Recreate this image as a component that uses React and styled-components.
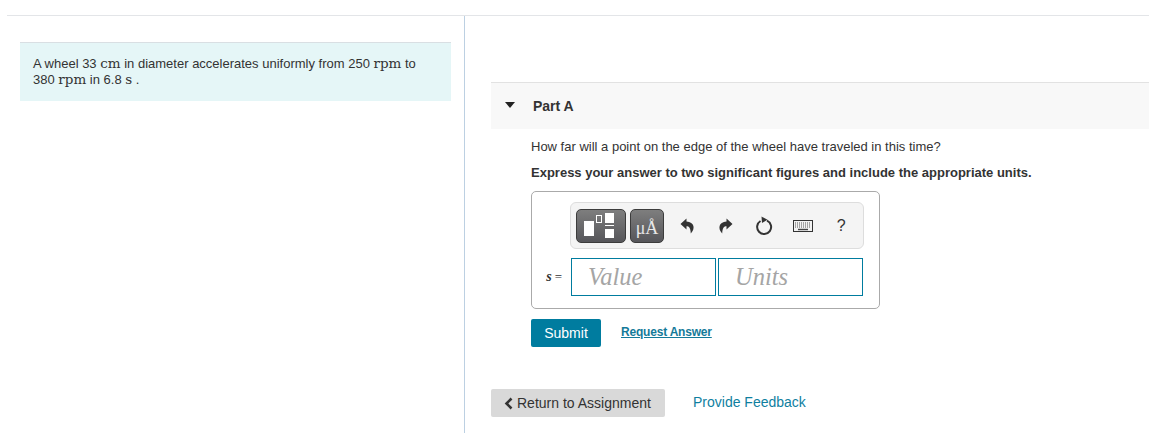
import React from "react";
import styled, { createGlobalStyle } from "styled-components";

const Global = createGlobalStyle`
  html, body { margin: 0; padding: 0; background: #fff; height: 433px; overflow: hidden; }
  body { font-family: "Liberation Sans", Arial, sans-serif; font-size: 13px; color: #333; }
`;
const Page = styled.div`
  height: 433px; box-sizing: border-box; padding: 15px 0 0 7px;
  display: flex; flex-direction: column;
`;
const Columns = styled.div`
  flex: 1; display: grid; grid-template-columns: 458px 1fr;
  border-top: 1px solid #e3e5e8;
`;
const LeftCol = styled.div`
  border-right: 1px solid #bcd0e2; padding: 26px 13px 0 13px;
`;
const Intro = styled.div`
  background: #e5f6f7; border-top: 1px solid #d9dfe3; height: 59px; box-sizing: border-box;
  padding: 13px 13px 0; font-size: 13px; line-height: 16px; color: #333;
  width: 431px;
`;
const MathText = styled.span`
  font-family: "DejaVu Serif", "Liberation Serif", serif; font-size: 13.5px; line-height: 0;
`;
const RightCol = styled.div`
  padding: 66px 0 0 26px; display: flex; flex-direction: column;
`;
const PartHeader = styled.div`
  height: 47px; box-sizing: border-box; background: #f8f8f8; border-top: 1px solid #e2e2e2;
  display: flex; align-items: center; padding-left: 14px;
`;
const Caret = styled.span`
  width: 0; height: 0; border-left: 5.5px solid transparent; border-right: 5.5px solid transparent;
  border-top: 6px solid #222; margin-right: 18px; margin-top: -2px;
`;
const PartTitle = styled.span`
  font-weight: 700; font-size: 14px; color: #333; margin-top: -1px;
`;
const Body = styled.div`
  padding: 9px 0 0 40px; display: flex; flex-direction: column;
`;
const Prompt = styled.div`
  font-size: 13px; line-height: 17px; margin-bottom: 9px; color: #333;
`;
const Instruct = styled(Prompt)`
  font-weight: 700; margin-bottom: 10px;
`;
const AnswerBox = styled.div`
  width: 349px; height: 118px; box-sizing: border-box; border: 1px solid #aaa; border-radius: 5px;
  display: grid; grid-template-columns: 38px 1fr; grid-template-rows: 47px 38px;
  row-gap: 9px; padding-top: 10px;
`;
const Toolbar = styled.div`
  grid-column: 2; width: 294px; height: 47px; box-sizing: border-box; background: #f4f4f4;
  border: 1px solid #ddd; border-radius: 6px; display: flex; align-items: center;
  padding-left: 5px;
`;
const TemplateBtn = styled.div`
  width: ${p => p.$w}px; height: 34px; box-sizing: border-box; margin-right: 4px; flex-shrink: 0;
  border: 1px solid #3c3c3c; border-radius: 5px;
  background: linear-gradient(#7e7e7e, #56565a);
  display: flex; align-items: center; justify-content: center; color: #e8e8e8;
  font-family: "Liberation Serif", serif; font-size: 18px; padding-top: 5px;
`;
const IconBtn = styled(TemplateBtn)`
  padding-top: 0;
`;
const Tool = styled.div`
  width: 38.5px; flex-shrink: 0; display: flex; justify-content: center; align-items: center;
  color: #333; font-size: 16px;
`;
const Equals = styled.div`
  grid-row: 2; grid-column: 1; display: flex; align-items: center; justify-content: flex-end;
  padding-right: 8px; font-size: 13px; color: #333; gap: 3px;
  font-family: "Liberation Serif", serif;
`;
const Var = styled.i`font-weight: 700; font-size: 14px;`;
const Inputs = styled.div`
  grid-row: 2; grid-column: 2; display: flex; gap: 2px; margin-left: 1px;
`;
const Field = styled.div`
  width: ${p => p.$w}px; height: 38px; box-sizing: border-box; border: 1px solid #007c9f;
  font-family: "Liberation Serif", serif; font-style: italic; font-size: 24.5px; color: #a5a5a5;
  display: flex; align-items: center; padding-left: 16px;
`;
const Actions = styled.div`
  display: flex; align-items: flex-start; margin-top: 10px;
`;
const Submit = styled.div`
  width: 70px; height: 28px; background: #007c9f; border-radius: 2px; color: #fff;
  font-size: 14px; display: flex; align-items: center; justify-content: center;
`;
const Request = styled.span`
  margin-left: 20px; margin-top: 6px; font-size: 12px; letter-spacing: -0.2px; font-weight: 700;
  color: #147a99; text-decoration: underline;
`;
const Footer = styled.div`
  display: flex; align-items: center; margin-top: 42px;
`;
const ReturnBtn = styled.div`
  width: 174px; height: 28px; background: #d9d9d9; border-radius: 2px; display: flex; align-items: center;
  padding-left: 13px; box-sizing: border-box; gap: 4px; color: #333; font-size: 14px;
`;
const Feedback = styled.span`
  margin-left: 28px; margin-top: -2px; font-size: 14px; color: #0f7f9f;
`;

const ReplyArrow = ({ flip }) => (
  <svg width="14" height="16" viewBox="0 0 14 16" style={flip ? { transform: "scaleX(-1)" } : undefined}>
    <path d="M6.5 0.5 L0.5 6 L6.5 11.5 L6.5 8.2 C9 8.2 10.6 9.6 10.8 15.5 C13.2 12.8 14 10.4 13.4 8 C12.8 5.4 10.4 3.6 6.5 3.4 Z" fill="#333" />
  </svg>
);
const Refresh = () => (
  <svg width="18" height="19" viewBox="0 0 18 19">
    <path d="M5.5 5 A7 7 0 1 0 12 4.6" fill="none" stroke="#333" strokeWidth="2" />
    <path d="M6.5 0.5 L12.5 3.8 L7 7 Z" fill="#333" />
  </svg>
);
const Keyboard = () => (
  <svg width="20" height="12" viewBox="0 0 20 12">
    <rect x="0.5" y="0.5" width="19" height="11" fill="#f2f2f2" stroke="#333" />
    <path d="M2 3h16M2 5h16M2 7h16" stroke="#555" strokeWidth="1" strokeDasharray="1 1" />
    <path d="M5 9.5h10" stroke="#444" strokeWidth="1.4" />
  </svg>
);
const TemplateIcon = () => (
  <svg width="48" height="32" viewBox="0 0 48 32">
    <rect x="7" y="11" width="10" height="15" fill="#fff" />
    <rect x="19.5" y="5.5" width="5" height="7" fill="none" stroke="#fff" />
    <rect x="28" y="3" width="9" height="10" fill="#fff" />
    <rect x="28" y="15" width="9" height="1" fill="#fff" />
    <rect x="28" y="19" width="9" height="9" fill="#fff" />
  </svg>
);

export default function App() {
  return (
    <Page>
      <Global />
      <Columns>
        <LeftCol>
          <Intro>
            A wheel 33 <MathText>cm</MathText> in diameter accelerates uniformly from 250 <MathText>rpm</MathText> to<br />380 <MathText>rpm</MathText> in 6.8 <MathText>s</MathText> .
          </Intro>
        </LeftCol>
        <RightCol>
          <PartHeader>
            <Caret />
            <PartTitle>Part A</PartTitle>
          </PartHeader>
          <Body>
            <Prompt>How far will a point on the edge of the wheel have traveled in this time?</Prompt>
            <Instruct>Express your answer to two significant figures and include the appropriate units.</Instruct>
            <AnswerBox>
              <Toolbar>
                <IconBtn $w={50}><TemplateIcon /></IconBtn>
                <TemplateBtn $w={34}>μÅ</TemplateBtn>
                <Tool><ReplyArrow /></Tool>
                <Tool><ReplyArrow flip /></Tool>
                <Tool><Refresh /></Tool>
                <Tool><Keyboard /></Tool>
                <Tool>?</Tool>
              </Toolbar>
              <Equals><Var>s</Var> =</Equals>
              <Inputs>
                <Field $w={145}>Value</Field>
                <Field $w={145}>Units</Field>
              </Inputs>
            </AnswerBox>
            <Actions>
              <Submit>Submit</Submit>
              <Request>Request Answer</Request>
            </Actions>
          </Body>
          <Footer>
            <ReturnBtn>
              <svg width="9" height="13" viewBox="0 0 9 13"><path d="M7.5 1.5 L2.5 6.5 L7.5 11.5" fill="none" stroke="#333" strokeWidth="2.6" /></svg>
              Return to Assignment
            </ReturnBtn>
            <Feedback>Provide Feedback</Feedback>
          </Footer>
        </RightCol>
      </Columns>
    </Page>
  );
}
